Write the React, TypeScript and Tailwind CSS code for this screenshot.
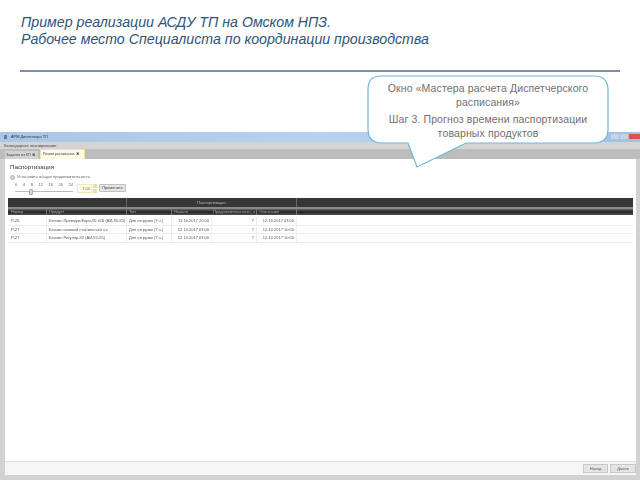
const ROWS = [
  { id: "Р-26", product: "Бензин Премиум Евро-95 к5Б (АИ-95-К5)", type: "Для отгрузки (7 ч.)", start: "11.10.2017 20:00", end: "12.10.2017 03:00" },
  { id: "Р-27", product: "Бензин газовый стабильный н.к", type: "Для отгрузки (7 ч.)", start: "12.10.2017 03:00", end: "12.10.2017 10:00" },
  { id: "Р-27", product: "Бензин Регуляр-92 (АИ-92-К5)", type: "Для отгрузки (7 ч.)", start: "12.10.2017 03:00", end: "12.10.2017 10:00" },
];

const COLS = "grid grid-cols-[39px_80px_45px_40px_45px_40px_1fr]";
const TICKS = [0, 4, 8, 12, 16, 20, 24];

function Toolbar() {
  return (
    <div className="flex items-end pl-[10px] mt-[2px]">
      <div className="w-[58px] shrink-0">
        <div className="flex justify-between text-[4px] leading-[6px] text-[#666]">
          {TICKS.map(t => <span key={t}>{t}</span>)}
        </div>
        <div className="relative h-[7px] flex items-center">
          <div className="h-px w-full bg-[#bbb]" />
          <div className="absolute left-[14px] top-[1px] w-[4px] h-[6px] rounded-[1px] bg-[#d5d5d5] border border-[#aaa]" />
        </div>
      </div>
      <div className="flex items-center gap-px mb-[2px] ml-[4px]">
        <div className="w-[15px] h-[9px] bg-[#fffde8] border border-[#f3eab0] flex items-center justify-end pr-px text-[4px] text-[#666]">7,00</div>
        <div className="w-[4px] h-[9px] flex flex-col gap-px">
          <div className="flex-1 bg-[#e9dfa0]" />
          <div className="flex-1 bg-[#e9dfa0]" />
        </div>
      </div>
      <div className="w-[27px] h-[8px] mb-[3px] ml-[2px] bg-[#e6e6e6] border border-[#c0c0c0] rounded-[1px] flex items-center justify-center text-[4px] text-[#444]">Применить</div>
    </div>
  );
}

function ScheduleTable() {
  return (
    <div className="mt-[3px] mx-[3px] text-[4px] text-[#555]">
      <div className="grid grid-cols-[119px_170px_1fr] h-[9px] bg-[#363636] text-[#bbb] leading-[9px] text-center">
        <div className="border-r border-[#666]" />
        <div className="border-r border-[#666]">Паспортизация</div>
        <div />
      </div>
      <div className="h-[2px] bg-[#8a8a8a]" />
      <div className={`${COLS} h-[6px] leading-[6px] bg-gradient-to-b from-[#666] via-[#222] to-[#555] text-[#aaa]`}>
        <div className="pl-[3px] border-r border-[#777]">Номер</div>
        <div className="pl-[2px] border-r border-[#777]">Продукт</div>
        <div className="pl-[2px] border-r border-[#777]">Тип</div>
        <div className="pl-[2px]">Начало</div>
        <div className="pl-px whitespace-nowrap border-r border-[#777]">Продолжительность, ч</div>
        <div className="pl-[2px] border-r border-[#777]">Окончание</div>
        <div />
      </div>
      <div className="pt-[2px]">
        {ROWS.map((r, i) => (
          <div key={i} className={`${COLS} h-[8.5px] leading-[8px] border-b border-[#ececec]`}>
            <div className="pl-[3px] border-r border-[#efefef]">{r.id}</div>
            <div className="pl-[2px] whitespace-nowrap overflow-hidden border-r border-[#efefef]">{r.product}</div>
            <div className="pl-[2px] whitespace-nowrap overflow-hidden border-r border-[#efefef]">{r.type}</div>
            <div className="text-right pr-[2px] whitespace-nowrap border-r border-[#efefef]">{r.start}</div>
            <div className="text-right pr-[2px] border-r border-[#efefef]">7</div>
            <div className="text-right pr-[2px] whitespace-nowrap border-r border-[#efefef]">{r.end}</div>
            <div />
          </div>
        ))}
      </div>
    </div>
  );
}

function DispatcherWindow() {
  return (
    <div className="flex-1 flex flex-col min-h-0 blur-[0.6px]">
      {/* title bar */}
      <div className="h-[10px] shrink-0 bg-gradient-to-r from-[#a9c6e4] via-[#b7d2ec] to-[#9fc3e6] flex items-center pl-[4px] gap-[4px] text-[3.9px] text-[#334]">
        <div className="w-[3px] h-[4px] bg-[#5a7fa8]" />
        <span>АРМ Диспетчера ТП</span>
        <div className="ml-auto flex h-[5px] gap-px self-start mt-[2px]">
          <div className="w-[8px] bg-[#c5d3e2]" />
          <div className="w-[8px] bg-[#c5d3e2]" />
          <div className="w-[11px] bg-[#d9534f]" />
        </div>
      </div>
      {/* menu strip */}
      <div className="h-[7px] shrink-0 bg-[#d4d4d4] pl-[4px] text-[4px] leading-[7px] text-[#444]">Календарное планирование</div>
      {/* tabs */}
      <div className="h-[10px] shrink-0 bg-[#bdbdbd] flex items-end pl-[5px] gap-[2px] text-[3.6px] text-[#444]">
        <div className="h-[8px] w-[33px] bg-[#d3d3d3] leading-[8px] pl-px whitespace-nowrap">Задания из КП ✖</div>
        <div className="h-[10px] w-[45px] bg-[#fdfbe8] border-x border-t border-[#efe6a0] leading-[9px] pl-[2px] whitespace-nowrap">Режим расписания ✖</div>
      </div>
      <div className="flex-1 flex flex-col min-h-0 bg-[#d2d2d2] pl-[5px] pr-[4px] pb-[5px]">
        <div className="flex-1 flex flex-col min-h-0 bg-white">
          <div className="pl-[5px] pt-[3px] text-[6.2px] leading-[9px] text-[#333]">Паспортизация</div>
          <div className="flex items-center gap-[2px] pl-[5px] mt-[3px] text-[4px] leading-[6px] text-[#666]">
            <div className="w-[5px] h-[5px] rounded-full bg-[#d5d5d5] border border-[#b5b5b5]" />
            <span>Установить общую продолжительность</span>
          </div>
          <Toolbar />
          <ScheduleTable />
          {/* footer buttons */}
          <div className="mt-auto h-[14px] bg-[#f6f6f6] border-t border-[#ddd] flex items-center justify-end gap-[2px]">
            <div className="w-[25px] h-[9px] bg-[#e4e4e4] border border-[#c8c8c8] text-[4px] leading-[7px] text-center text-[#555]">Назад</div>
            <div className="w-[26px] h-[9px] bg-[#e4e4e4] border border-[#c8c8c8] text-[4px] leading-[7px] text-center text-[#555]">Далее</div>
          </div>
        </div>
      </div>
    </div>
  );
}

export default function App() {
  return (
    <div className="relative w-[640px] h-[480px] overflow-hidden bg-white flex flex-col font-['Liberation_Sans',sans-serif]">
      <header className="shrink-0 pl-[21px] pt-[14px] text-[14.2px] leading-[17px] italic text-[#2f5578]">
        <p>Пример реализации АСДУ ТП на Омском НПЗ.</p>
        <p>Рабочее место Специалиста по координации производства</p>
      </header>
      <div className="shrink-0 h-[2px] mt-[22px] mx-[20px] bg-[#7c8ea6]" />
      <div className="shrink-0 h-[60px]" />
      <DispatcherWindow />

      {/* callout over the window */}
      <div className="absolute left-[367px] top-[75px] w-[242px] h-[94px]">
        <svg className="absolute inset-0" width="242" height="94" viewBox="0 0 242 94">
          <path
            d="M13 1 H227 Q241 1 241 15 V54 Q241 68 227 68 H99 L50 92 L41 68 H15 Q1 68 1 54 V15 Q1 1 13 1 Z"
            fill="#fff"
            stroke="#6cb8e0"
            strokeWidth="1.2"
          />
        </svg>
        <div className="relative w-[242px] pt-[6px] text-center text-[10.5px] leading-[14px] tracking-[0.125px] text-[#707070]">
          <p>Окно «Мастера расчета Диспетчерского расписания»</p>
          <p className="mt-[3px]">Шаг 3. Прогноз времени паспортизации товарных продуктов</p>
        </div>
      </div>
    </div>
  );
}
